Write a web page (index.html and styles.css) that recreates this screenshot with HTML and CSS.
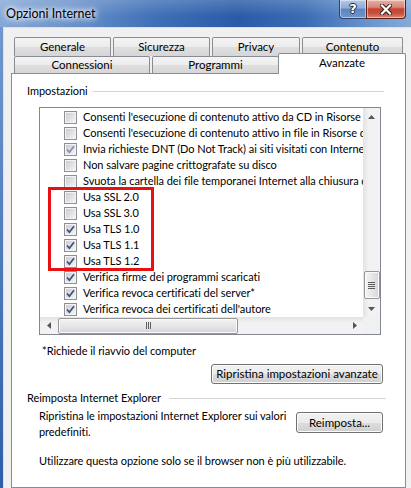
FILE: index.html
```html
<!DOCTYPE html>
<html lang="it">
<head>
<meta charset="utf-8">
<title>Opzioni Internet</title>
<link rel="stylesheet" href="styles.css">
</head>
<body>
<div class="window">
  <div class="titlebar">
    <span class="title">Opzioni Internet</span>
    <div class="caption">
      <div class="cap-btn cap-help"><span>?</span></div>
      <div class="cap-btn cap-close">
        <svg width="12" height="11" viewBox="0 0 12 11"><path d="M2 1.5 L10 9.5 M10 1.5 L2 9.5" stroke="#2a1a1a" stroke-width="4" stroke-linecap="square"/><path d="M2 1.5 L10 9.5 M10 1.5 L2 9.5" stroke="#fff" stroke-width="2.2" stroke-linecap="square"/></svg>
      </div>
    </div>
  </div>
  <div class="frame">
    <div class="frame-left"></div>
    <div class="client">
      <div class="tabs">
        <div class="tabrow row1">
          <div class="tab t-gen">Generale</div>
          <div class="tab t-sic">Sicurezza</div>
          <div class="tab t-pri">Privacy</div>
          <div class="tab t-con">Contenuto</div>
        </div>
        <div class="tabrow row2">
          <div class="tab t-cnx">Connessioni</div>
          <div class="tab t-prg">Programmi</div>
          <div class="tab t-avz selected">Avanzate</div>
        </div>
      </div>
      <div class="panel">
        <div class="group-head"><span>Impostazioni</span><span class="gline"></span></div>
        <div class="listbox">
          <div class="items">
            <div class="row"><span class="cb"></span><span class="lbl">Consenti l'esecuzione di contenuto attivo da CD in Risorse del computer*</span></div>
            <div class="row"><span class="cb"></span><span class="lbl">Consenti l'esecuzione di contenuto attivo in file in Risorse del computer*</span></div>
            <div class="row"><span class="cb checked light"><svg width="9" height="9" viewBox="0 0 9 9"><path d="M1 4.5 L3.4 7.2 L8 1.2" fill="none" stroke-width="1.7"/></svg></span><span class="lbl">Invia richieste DNT (Do Not Track) ai siti visitati con Internet Explorer</span></div>
            <div class="row"><span class="cb"></span><span class="lbl">Non salvare pagine crittografate su disco</span></div>
            <div class="row"><span class="cb"></span><span class="lbl">Svuota la cartella dei file temporanei Internet alla chiusura del browser</span></div>
            <div class="row"><span class="cb"></span><span class="lbl">Usa SSL 2.0</span></div>
            <div class="row"><span class="cb"></span><span class="lbl">Usa SSL 3.0</span></div>
            <div class="row"><span class="cb checked"><svg width="9" height="9" viewBox="0 0 9 9"><path d="M1 4.5 L3.4 7.2 L8 1.2" fill="none" stroke-width="1.7"/></svg></span><span class="lbl">Usa TLS 1.0</span></div>
            <div class="row"><span class="cb checked"><svg width="9" height="9" viewBox="0 0 9 9"><path d="M1 4.5 L3.4 7.2 L8 1.2" fill="none" stroke-width="1.7"/></svg></span><span class="lbl">Usa TLS 1.1</span></div>
            <div class="row"><span class="cb checked"><svg width="9" height="9" viewBox="0 0 9 9"><path d="M1 4.5 L3.4 7.2 L8 1.2" fill="none" stroke-width="1.7"/></svg></span><span class="lbl">Usa TLS 1.2</span></div>
            <div class="row"><span class="cb checked"><svg width="9" height="9" viewBox="0 0 9 9"><path d="M1 4.5 L3.4 7.2 L8 1.2" fill="none" stroke-width="1.7"/></svg></span><span class="lbl">Verifica firme dei programmi scaricati</span></div>
            <div class="row"><span class="cb checked"><svg width="9" height="9" viewBox="0 0 9 9"><path d="M1 4.5 L3.4 7.2 L8 1.2" fill="none" stroke-width="1.7"/></svg></span><span class="lbl">Verifica revoca certificati del server*</span></div>
            <div class="row"><span class="cb checked"><svg width="9" height="9" viewBox="0 0 9 9"><path d="M1 4.5 L3.4 7.2 L8 1.2" fill="none" stroke-width="1.7"/></svg></span><span class="lbl">Verifica revoca dei certificati dell'autore</span></div>
            <div class="highlight"></div>
          </div>
          <div class="vscroll">
            <div class="sbtn"><svg width="7" height="4" viewBox="0 0 7 4"><path d="M0 4 L3.5 0 L7 4 Z" fill="#555"/></svg></div>
            <div class="vtrack">
              <div class="vthumb"><span></span><span></span><span></span><span></span></div>
            </div>
            <div class="sbtn"><svg width="7" height="4" viewBox="0 0 7 4"><path d="M0 0 L7 0 L3.5 4 Z" fill="#555"/></svg></div>
          </div>
          <div class="hscroll">
            <div class="sbtn"><svg width="4" height="7" viewBox="0 0 4 7"><path d="M4 0 L4 7 L0 3.5 Z" fill="#555"/></svg></div>
            <div class="htrack">
              <div class="hthumb"><span></span><span></span><span></span></div>
            </div>
            <div class="sbtn"><svg width="4" height="7" viewBox="0 0 4 7"><path d="M0 0 L4 3.5 L0 7 Z" fill="#555"/></svg></div>
          </div>
          <div class="corner"></div>
        </div>
        <p class="note">*Richiede il riavvio del computer</p>
        <div class="btn-row"><button class="btn btn-restore">Ripristina impostazioni avanzate</button></div>
        <div class="group-head g2"><span>Reimposta Internet Explorer</span><span class="gline"></span></div>
        <div class="reset-row">
          <p class="reset-text">Ripristina le impostazioni Internet Explorer sui valori<br>predefiniti.</p>
          <button class="btn btn-reset">Reimposta...</button>
        </div>
        <p class="warn">Utilizzare questa opzione solo se il browser non è più utilizzabile.</p>
      </div>
    </div>
  </div>
</div>
</body>
</html>
```

FILE: styles.css
```css
* { box-sizing: border-box; margin: 0; padding: 0; }
html, body { width: 411px; height: 488px; overflow: hidden; }
body {
  font-family: Lato, "Noto Sans", sans-serif;
  font-size: 11px;
  line-height: 16px;
  letter-spacing: -0.05px;
  color: #000;
  background: #f0f0f0;
}
.window {
  width: 411px;
  height: 488px;
  display: flex;
  flex-direction: column;
  background: #4a7bc0;
}
.titlebar {
  height: 27px;
  flex: none;
  display: flex;
  align-items: flex-start;
  background:
    linear-gradient(rgba(255,255,255,0.18), rgba(255,255,255,0) 60%),
    linear-gradient(to right, #86a8d6 0%, #6891ca 18%, #3f6fb6 38%, #2b5ba8 58%, #3a6bb3 74%, #6a96ce 90%, #86aad7 100%);
}
.title {
  padding-left: 6px;
  line-height: 27px;
  font-size: 12.5px;
  letter-spacing: 0;
  color: #000;
  text-shadow: 0 0 10px #fff, 0 0 7px #fff, 0 0 4px rgba(255,255,255,0.9);
}
.caption {
  margin-left: auto;
  margin-right: 5px;
  display: flex;
}
.cap-btn {
  height: 19px;
  display: flex;
  align-items: center;
  justify-content: center;
  border: 1px solid #2e4266;
  border-top: none;
  box-shadow: inset 0 0 0 1px rgba(255,255,255,0.45);
}
.cap-help {
  width: 27px;
  border-right: none;
  border-radius: 0 0 0 4px;
  background: linear-gradient(#b4c9e6 0%, #8eacd8 45%, #5e85c2 50%, #6f95cc 100%);
  color: #fff;
  font-family: "DejaVu Sans", sans-serif;
  font-weight: bold;
  font-size: 13px;
  text-shadow: 0 0 1px #1c2c48, 1px 0 0 #1c2c48, -1px 0 0 #1c2c48, 0 1px 0 #1c2c48, 0 -1px 0 #1c2c48;
}
.cap-close {
  width: 40px;
  border-color: #5a1e14;
  border-radius: 0 0 4px 0;
  background: linear-gradient(#e8b0a4 0%, #d9867a 40%, #c4432f 50%, #c8503c 75%, #db8a78 100%);
}
.frame {
  flex: 1;
  display: flex;
  min-height: 0;
}
.frame-left {
  width: 4px;
  flex: none;
  background:
    linear-gradient(to right, rgba(0,0,0,0) 3px, #d6e2f0 3px),
    linear-gradient(#6f98cf, #2e5ea9);
}
.client {
  flex: 1;
  background: #f0f0f0;
  border-top: 1px solid #d6e2f0;
  padding: 9px 0 0 7px;
  display: flex;
  flex-direction: column;
  min-width: 0;
}
.tabs { flex: none; font-size: 11.5px; }
.tabrow {
  display: flex;
  gap: 2px;
  margin-left: 3px;
}
.tab {
  border: 1px solid #898c95;
  border-bottom: none;
  border-radius: 2px 2px 0 0;
  background: linear-gradient(#f4f4f4 0%, #ececec 50%, #dfdfdf 50%, #d6d6d6 100%);
  display: flex;
  align-items: center;
  justify-content: center;
  white-space: nowrap;
}
.row1 .tab { height: 19px; }
.row2 .tab { height: 17px; }
.t-gen { width: 97px; }
.t-sic { width: 97px; }
.t-pri { width: 88px; }
.t-con { width: 101px; }
.t-cnx { width: 136px; }
.t-prg { width: 127px; }
.row2 .t-avz {
  width: 128px;
  height: 21px;
  margin-top: -3px;
  margin-bottom: -1px;
  margin-left: -3px;
  background: #fff;
  align-items: flex-start;
  padding-top: 1px;
  position: relative;
  z-index: 1;
}
.panel {
  flex: 1;
  width: 395px;
  background: #fff;
  border: 1px solid #898c95;
  padding: 9px 21px 0 15px;
}
.group-head {
  display: flex;
  align-items: center;
  gap: 5px;
  height: 16px;
  white-space: nowrap;
}
.gline {
  flex: 1;
  height: 1px;
  background: #d5d5d5;
}
.g2 { margin-top: 6px; }
.g2 .gline { margin-right: -2px; margin-left: 3px; }
.listbox {
  margin: 8px 3px 0 12px;
  height: 228px;
  border: 1px solid #828790;
  display: grid;
  grid-template-columns: 1fr 17px;
  grid-template-rows: 1fr 17px;
  background: #fff;
}
.items {
  position: relative;
  padding-top: 1px;
  overflow: hidden;
  min-width: 0;
}
.row {
  height: 16px;
  display: flex;
  align-items: center;
  padding-left: 24px;
  gap: 6px;
  white-space: nowrap;
}
.lbl { white-space: nowrap; }
.cb {
  flex: none;
  width: 13px;
  height: 13px;
  border: 1px solid #8f8f8f;
  padding: 1px;
  background: linear-gradient(135deg, #c9cdd3, #f3f3f4) content-box, #f4f4f4;
  display: flex;
  align-items: center;
  justify-content: center;
}
.cb svg { display: block; }
.cb svg path { stroke: #3b4f86; }
.cb.light svg path { stroke: #7e8db4; }
.highlight {
  position: absolute;
  left: 8px;
  top: 79px;
  width: 106px;
  height: 84px;
  border: 3px solid #e81010;
}
.vscroll {
  display: flex;
  flex-direction: column;
  background: linear-gradient(to right, #e3e3e3, #f2f2f2 35%, #f2f2f2);
}
.sbtn {
  width: 17px;
  height: 17px;
  flex: none;
  display: flex;
  align-items: center;
  justify-content: center;
}
.sbtn svg { display: block; }
.vtrack {
  flex: 1;
  display: flex;
  flex-direction: column;
  justify-content: flex-end;
  align-items: center;
}
.vthumb {
  width: 16px;
  height: 28px;
  margin-bottom: 1px;
  border: 1px solid #979797;
  border-radius: 2px;
  background: linear-gradient(to right, #f4f4f4, #e6e6e6 50%, #d6d6d6);
  box-shadow: inset 0 0 0 1px #fbfbfb;
  display: flex;
  flex-direction: column;
  align-items: center;
  justify-content: center;
  gap: 1px;
}
.vthumb span {
  width: 7px;
  height: 1px;
  background: #5e5e5e;
}
.hscroll {
  display: flex;
  background: linear-gradient(#e3e3e3, #f2f2f2 35%, #f2f2f2);
}
.htrack {
  flex: 1;
  display: flex;
  align-items: center;
  padding-left: 1px;
}
.hthumb {
  width: 180px;
  height: 16px;
  border: 1px solid #979797;
  border-radius: 2px;
  background: linear-gradient(#f4f4f4, #e6e6e6 50%, #d6d6d6);
  box-shadow: inset 0 0 0 1px #fbfbfb;
  display: flex;
  align-items: center;
  justify-content: center;
  gap: 1px;
}
.hthumb span {
  width: 1px;
  height: 7px;
  background: #5e5e5e;
}
.corner { background: #f0f0f0; }
.note {
  margin: 8px 0 0 15px;
}
.btn-row {
  display: flex;
  justify-content: flex-end;
  margin-top: 5px;
  padding-right: 1px;
}
.btn {
  font: inherit;
  color: #000;
  border: 1px solid #707070;
  border-radius: 3px;
  background: linear-gradient(#f2f2f2 0%, #ebebeb 50%, #dddddd 50%, #cfcfcf 100%);
  box-shadow: inset 0 0 0 1px #fcfcfc;
  display: flex;
  align-items: center;
  justify-content: center;
  white-space: nowrap;
}
.btn-restore { width: 172px; height: 20px; font-size: 11.5px; }
.reset-row {
  display: flex;
  justify-content: space-between;
  align-items: flex-start;
  margin: 2px 1px 0 12px;
}
.reset-text { white-space: nowrap; }
.btn-reset { width: 87px; height: 21px; margin-top: 4px; flex: none; font-size: 11.5px; }
.warn { margin: 13px 0 0 12px; white-space: nowrap; }
```
